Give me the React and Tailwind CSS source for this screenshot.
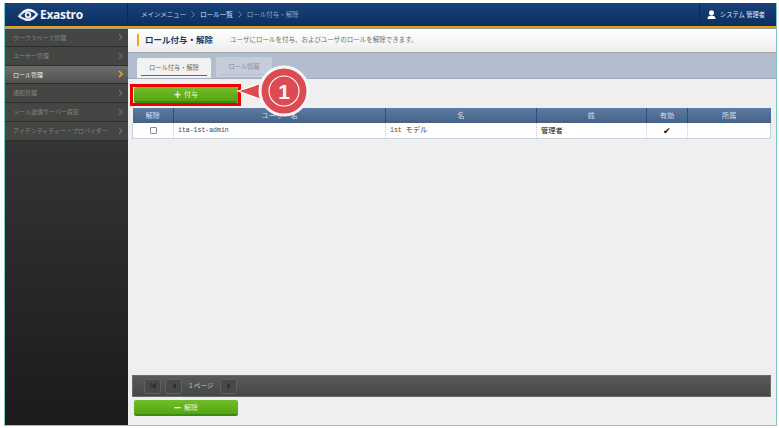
const F = '"Noto Sans CJK JP","Liberation Sans",sans-serif';

function Logo() {
  return (
    <svg width="22" height="14" viewBox="0 0 22 14" fill="none">
      <path d="M0.5 8 C4 3.5 8 0.8 12 0.8 C15.5 0.8 19 3 21.5 6 C18.5 10.5 15 13 11 13 C7 13 3.5 11 0.5 8Z" fill="#f2f5f9" />
      <path d="M3.5 8 C6 5.2 9 3.6 12 3.6 C14.5 3.6 16.8 4.6 18.6 6.2 C16.5 8.8 14 10.4 11 10.4 C8 10.4 5.5 9.6 3.5 8Z" fill="#123a70" />
      <circle cx="11" cy="7" r="3.2" fill="#f2f5f9" />
      <circle cx="11" cy="7" r="1.4" fill="#123a70" />
      <path d="M1 8 L5 3.5 M17 1.5 L21 6 M4 11 L8 12.5" stroke="#123a70" strokeWidth="0.7" />
    </svg>
  );
}

function Chevron({ active }) {
  return (
    <svg width="5" height="8" viewBox="0 0 5 8" fill="none">
      <path d="M1 1l3 3-3 3" stroke={active ? "#e8a020" : "#6b6b6b"} strokeWidth={active ? 1.6 : 1.1} />
    </svg>
  );
}

function Crumb() {
  return (
    <svg width="4" height="7" viewBox="0 0 4 7" fill="none">
      <path d="M.5 .5l3 3-3 3" stroke="#8fa4bf" strokeWidth=".7" />
    </svg>
  );
}

const menu = [
  ["ワークスペース管理", false, "h-[18px]"],
  ["ユーザー管理", false, "h-[19px]"],
  ["ロール管理", true, "h-[18px]"],
  ["通知管理", false, "h-[19px]"],
  ["メール送信サーバー設定", false, "h-[19px]"],
  ["アイデンティティー・プロバイダー", false, "h-[19px]"],
];

function Pager({ children }) {
  return (
    <div className="w-[17px] h-[15px] flex items-center justify-center rounded-[2px] border border-[#5f615f] bg-[#474947]">
      {children}
    </div>
  );
}

function GreenButton({ symbol, label }) {
  return (
    <div className="w-[104px] h-4 rounded-[2px] flex items-center justify-center gap-[3px] bg-gradient-to-b from-[#72bd28] to-[#56a513] border-b-2 border-[#3d8a10] text-[#eaf5dc] text-[7px] leading-none">
      <span className="text-[12px] font-bold leading-none">{symbol}</span>
      <span>{label}</span>
    </div>
  );
}

export default function App() {
  return (
    <div className="w-[779px] h-[428px] bg-white pt-[3px] pl-1 pr-[2px] pb-[2px] overflow-hidden" style={{ fontFamily: F }}>
      <div className="h-full flex flex-col border-x border-b border-[#7ccbc4]">
        <header className="h-[23px] shrink-0 flex items-center bg-gradient-to-b from-[#17417a] to-[#0b2f60] text-[#c4d0df] text-[6.5px]">
          <div className="w-[123px] h-full flex items-center pl-[12px] gap-[1px] border-r border-[#0a2a55]">
            <Logo />
            <span className="text-[#f2f5f9] text-[12px] font-bold tracking-tight" style={{ fontFamily: '"Open Sans",sans-serif' }}>Exastro</span>
          </div>
          <div className="flex-1 flex items-center pl-[13px] gap-[5px]">
            <span>メインメニュー</span>
            <Crumb />
            <span className="text-[#dce4ee]">ロール一覧</span>
            <Crumb />
            <span className="text-[#8fa4bf]">ロール付与・解除</span>
          </div>
          <div className="w-[77px] h-full flex items-center gap-[4px] pl-[7px] border-l border-[#0a2a55] text-[#e3e9f1] text-[6.25px]">
            <svg width="9" height="9" viewBox="0 0 9 9"><circle cx="4.5" cy="2.7" r="2.5" fill="#fff" /><path d="M0.5 9c0-2.6 1.6-3.4 4-3.4s4 .8 4 3.4z" fill="#fff" /></svg>
            <span>システム 管理者</span>
          </div>
        </header>
        <div className="h-[2px] shrink-0 bg-[#e8a106]" />
        <div className="h-px shrink-0 bg-[#9a9a9a]" />
        <div className="flex-1 flex min-h-0">
          <aside className="w-[123px] shrink-0 bg-gradient-to-b from-[#3d3f3e] to-[#1b1b1b]">
            {menu.map(([t, a, h]) => (
              <div key={t} className={h + " flex items-center justify-between pl-2 pr-[5px] pb-px border-b border-[#2c2c2c] text-[6px] whitespace-nowrap " + (a ? "bg-gradient-to-b from-[#6c6c6a] to-[#515150] text-[#f0f0f0]" : "bg-[#444644] text-[#858583]")}>
                <span>{t}</span>
                <Chevron active={a} />
              </div>
            ))}
          </aside>
          <main className="flex-1 min-w-0 bg-[#efefef] flex flex-col">
            <div className="h-[23px] shrink-0 flex items-center pl-[9px] pb-[2px] gap-[6px] bg-gradient-to-b from-[#ffffff] to-[#eeeeee]">
              <div className="w-[2px] h-3 bg-[#eea71e]" />
              <span className="text-[#0f3a6b] text-[8.5px] font-bold whitespace-nowrap">ロール付与・解除</span>
              <span className="ml-[11px] text-[#6f6f6f] text-[6.5px] whitespace-nowrap">ユーザにロールを付与、およびユーザのロールを解除できます。</span>
            </div>
            <div className="h-[27px] shrink-0 flex items-end pl-[9px] gap-[5px] bg-[#b2bdd0] border-t border-[#a5a5a5] border-b border-b-[#a3aebf]">
              <div className="w-[74px] h-[20px] rounded-t-[2px] bg-[#f2f2f2] text-[#666] text-[6.25px] flex items-center justify-center relative">
                ロール付与・解除
                <div className="absolute left-1 right-1 bottom-[2px] h-px bg-[#50688c]" />
              </div>
              <div className="w-[56px] h-[20px] mb-px rounded-t-[2px] bg-[#c6ccd8] text-[#8a8f99] text-[6.25px] flex items-center justify-center relative">
                ロール情報
                <div className="absolute left-1 right-1 bottom-[2px] h-px bg-[#b6bcc9]" />
              </div>
            </div>
            <div className="flex-1 min-h-0 flex flex-col px-1 relative">
              <div className="h-[29px] shrink-0 pt-2 relative">
                <div className="relative z-10 ml-[2px] w-[104px]">
                  <GreenButton symbol="+" label="付与" />
                  <div className="absolute -left-[4px] -top-[3px] w-[111px] h-[22px] border-[3px] border-[#f00000]" />
                </div>
                <svg className="absolute left-[101px] -top-[17px] z-20" width="90" height="60" viewBox="0 0 90 60">
                  <path d="M5 29 L35 19 L35 40Z" fill="#dc4a52" stroke="#fff" strokeWidth="1.2" />
                  <circle cx="51" cy="29" r="24" fill="#dc4a52" stroke="#f6f6f6" strokeWidth="3" />
                  <circle cx="51" cy="29" r="15" fill="none" stroke="#fff" strokeWidth="1.1" />
                </svg>
                <div className="absolute left-[101px] -top-[17px] z-30 w-[102px] h-[58px] flex items-center justify-center text-white text-[21px] font-bold leading-none" style={{ fontFamily: '"Liberation Sans",sans-serif' }}>1</div>
              </div>
              <table className="w-[639px] table-fixed border-collapse text-[7.25px]">
                <thead>
                  <tr className="h-[15px] bg-gradient-to-b from-[#5d7ba3] to-[#456287] text-[#d5deea]">
                    <th className="w-[41px] font-normal border-r border-[#2f4d7a] pb-px">解除</th>
                    <th className="w-[212px] font-normal border-r border-[#2f4d7a] pb-px">ユーザー名</th>
                    <th className="w-[151px] font-normal border-r border-[#2f4d7a] pb-px">名</th>
                    <th className="w-[110px] font-normal border-r border-[#2f4d7a] pb-px">姓</th>
                    <th className="w-[41px] font-normal border-r border-[#2f4d7a] pb-px">有効</th>
                    <th className="font-normal pb-px">所属</th>
                  </tr>
                </thead>
                <tbody>
                  <tr className="h-[15px] bg-white text-[#444] border-x border-b border-[#c6d0de]">
                    <td className="border-r border-dotted border-[#c0cbe0] text-center">
                      <span className="inline-block w-[7px] h-[7px] border border-[#8a8a8a] rounded-[1px] bg-white align-middle" />
                    </td>
                    <td className="border-r border-dotted border-[#c0cbe0] pl-1 pt-px text-[6.5px]" style={{ fontFamily: '"Liberation Mono",monospace' }}>ita-1st-admin</td>
                    <td className="border-r border-dotted border-[#c0cbe0] pl-[4px]"><span className="text-[6.5px]" style={{ fontFamily: '"Liberation Mono",monospace' }}>1st </span>モデル</td>
                    <td className="border-r border-dotted border-[#c0cbe0] pl-[4px] text-[#111]">管理者</td>
                    <td className="border-r border-dotted border-[#c0cbe0] text-center text-[#111] text-[9px] leading-none">✔</td>
                    <td />
                  </tr>
                </tbody>
              </table>
              <div className="flex-1" />
              <div className="w-[639px] h-[22px] shrink-0 flex items-center pl-[11px] gap-1 bg-gradient-to-b from-[#585a58] to-[#454745] border border-[#6a6c6a] text-[#c6c6c6] text-[6.5px]">
                <Pager><svg width="6" height="6" viewBox="0 0 6 6"><path d="M1 0v6M5.5 0v6L2 3z" stroke="#2f312f" fill="#2f312f" strokeWidth=".8" /></svg></Pager>
                <Pager><svg width="6" height="6" viewBox="0 0 6 6"><path d="M5 0v6L1 3z" fill="#2f312f" /></svg></Pager>
                <span className="mx-[3px] whitespace-nowrap">1 ページ</span>
                <Pager><svg width="6" height="6" viewBox="0 0 6 6"><path d="M1 0v6l4-3z" fill="#2f312f" /></svg></Pager>
              </div>
              <div className="h-[28px] shrink-0 pt-[3px] pl-[2px]">
                <GreenButton symbol="−" label="解除" />
              </div>
            </div>
          </main>
        </div>
      </div>
    </div>
  );
}
